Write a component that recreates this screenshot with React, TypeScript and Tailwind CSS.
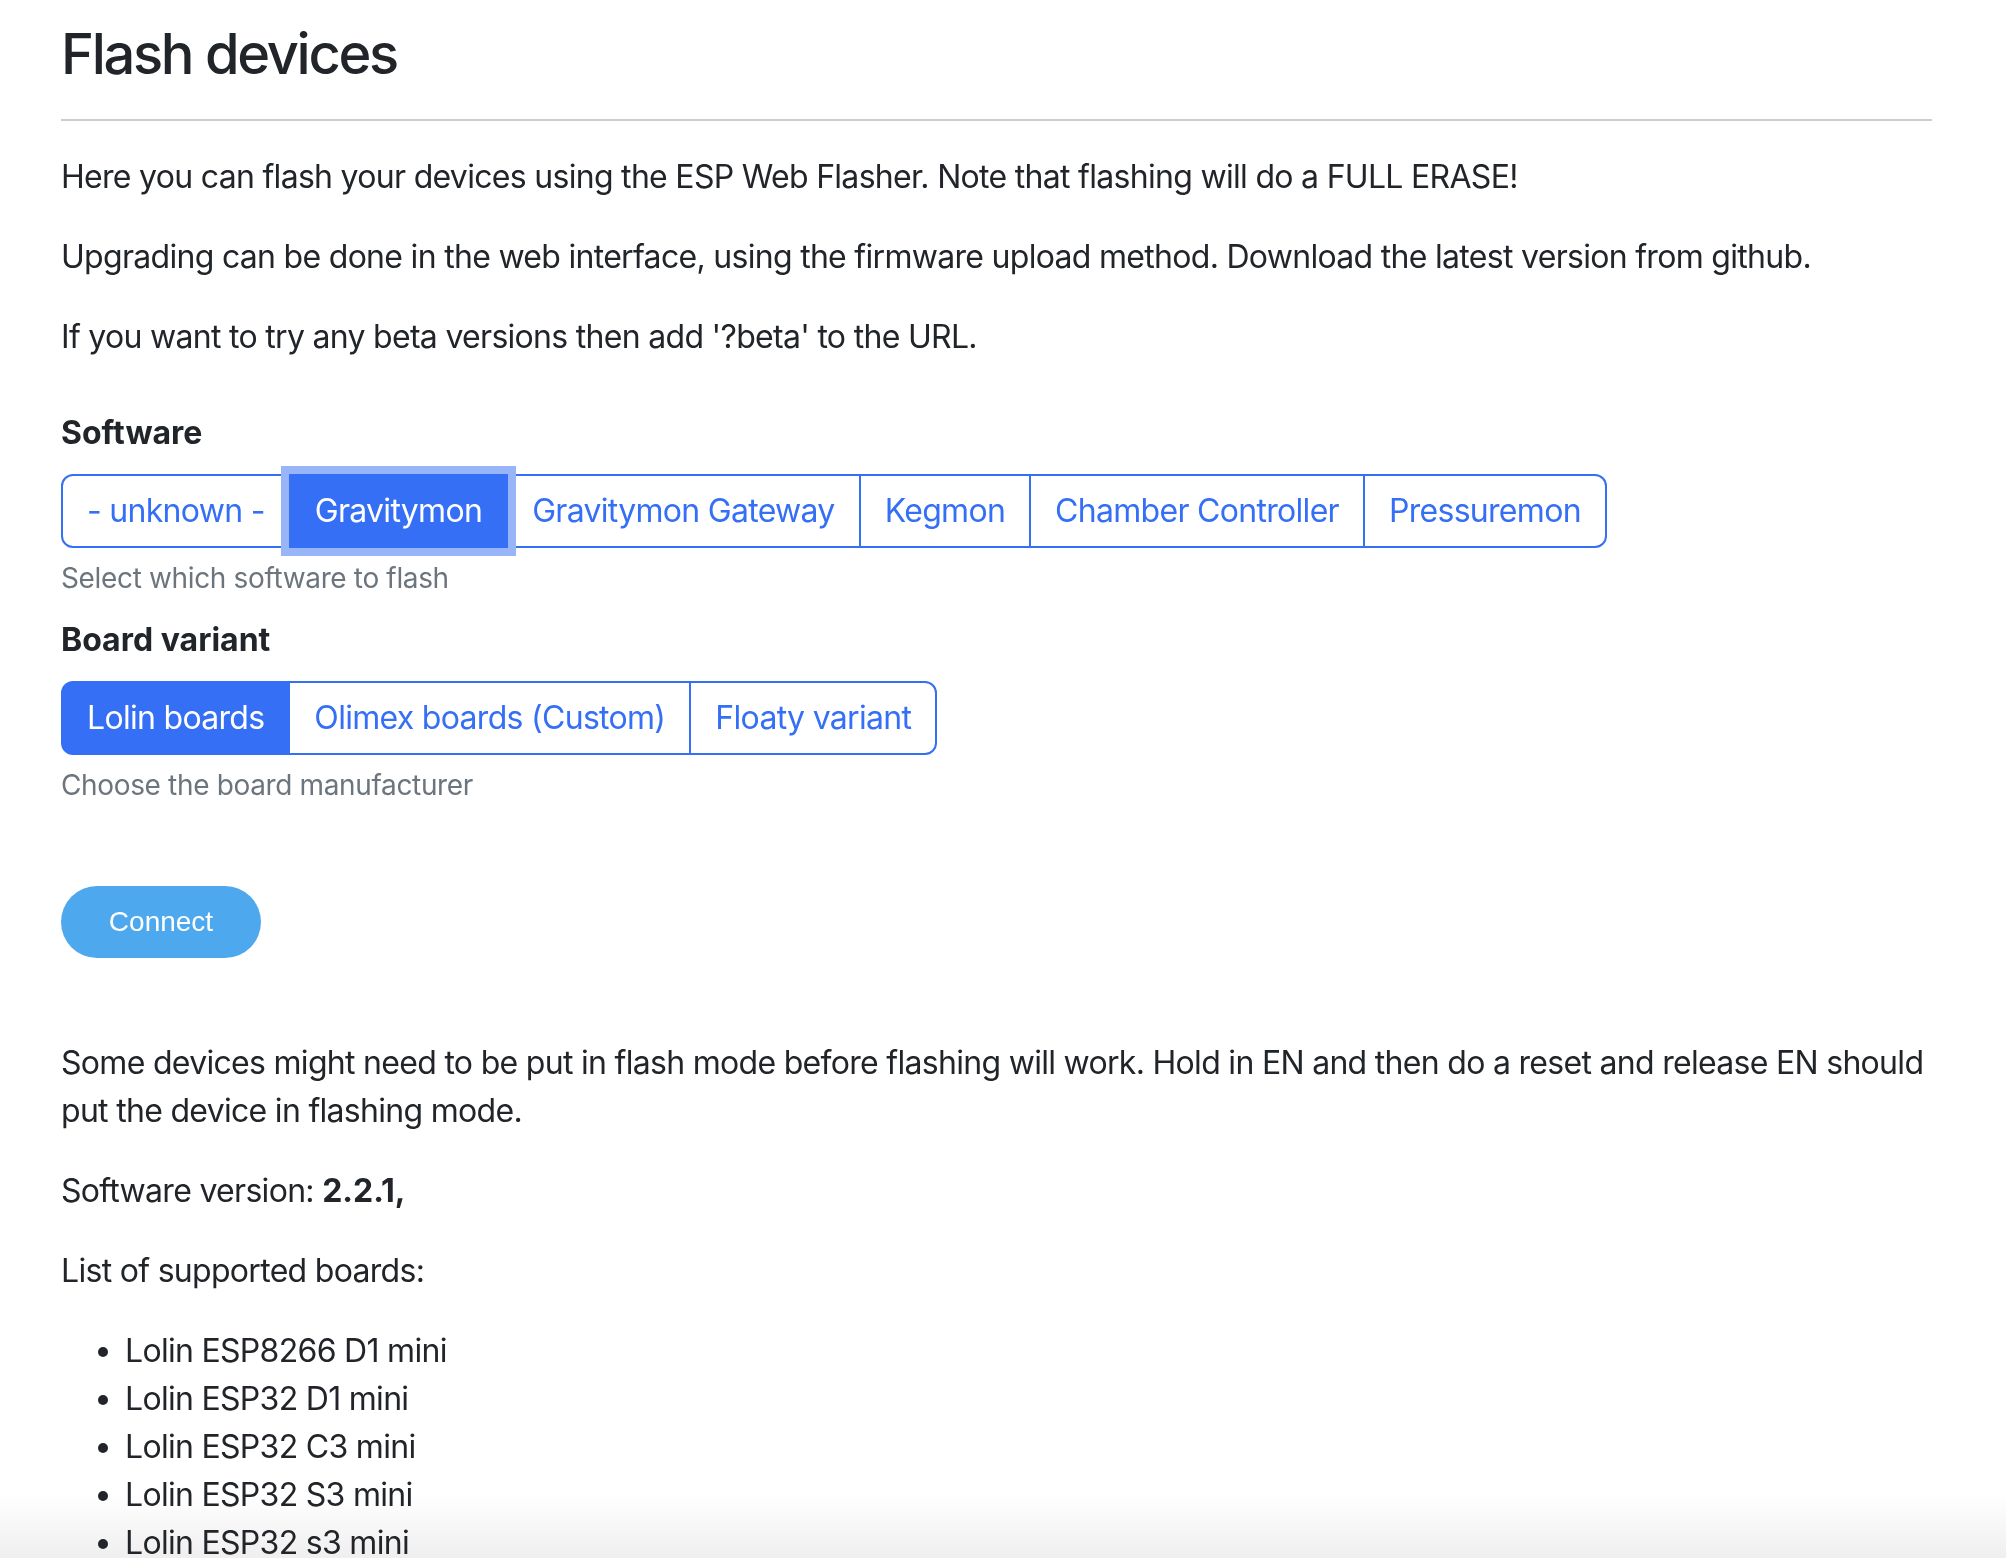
const softwareOptions = [
  '- unknown -',
  'Gravitymon',
  'Gravitymon Gateway',
  'Kegmon',
  'Chamber Controller',
  'Pressuremon',
];

const boardOptions = ['Lolin boards', 'Olimex boards (Custom)', 'Floaty variant'];

const boards = [
  'Lolin ESP8266 D1 mini',
  'Lolin ESP32 D1 mini',
  'Lolin ESP32 C3 mini',
  'Lolin ESP32 S3 mini',
  'Lolin ESP32 s3 mini',
];

function ButtonGroup({
  options,
  active,
  focused,
}: {
  options: string[];
  active: number;
  focused?: boolean;
}) {
  return (
    <div className="flex">
      {options.map((label, i) => {
        const isActive = i === active;
        return (
          <button
            key={label}
            className={[
              'h-[74px] px-[24px] border-2 border-[#346ff5] text-[32px] leading-[48px] tracking-[-0.7px] whitespace-nowrap',
              i > 0 ? '-ml-[2px]' : '',
              i === 0 ? 'rounded-l-[12px]' : '',
              i === options.length - 1 ? 'rounded-r-[12px]' : '',
              isActive ? 'bg-[#346ff5] text-white relative z-10' : 'bg-white text-[#346ff5]',
              isActive && focused ? 'shadow-[0_0_0_8px_#98b5f8]' : '',
            ].join(' ')}
          >
            {label}
          </button>
        );
      })}
    </div>
  );
}

export default function App() {
  return (
    <div className="min-h-[1558px] bg-white text-[#212529] font-['Inter','Noto_Sans',sans-serif] text-[32px] leading-[48px] tracking-[-0.7px]">
      <div className="fixed left-0 right-0 bottom-0 h-[64px] bg-linear-to-b from-white to-[#efefef] z-0" />
      <div className="relative z-10 pl-[61px] pr-[74px] pt-[21px]">
        <h1 className="text-[56px] leading-[67px] font-medium tracking-[-2.3px]">Flash devices</h1>
        <hr className="mt-[31px] mb-[32px] border-0 h-[2px] bg-[#cdcdcd]" />

        <p className="mb-[32px]">
          Here you can flash your devices using the ESP Web Flasher. Note that flashing will do a FULL ERASE!
        </p>
        <p className="mb-[32px]">
          Upgrading can be done in the web interface, using the firmware upload method. Download the latest
          version from github.
        </p>
        <p className="mb-[32px]">If you want to try any beta versions then add '?beta' to the URL.</p>

        <div className="pt-[16px]">
          <div className="font-bold tracking-normal mb-[17px]">Software</div>
          <ButtonGroup options={softwareOptions} active={1} focused />
          <div className="mt-[9px] text-[28px] leading-[42px] tracking-[-0.35px] text-[#6c757d]">
            Select which software to flash
          </div>
        </div>

        <div className="mt-[17px]">
          <div className="font-bold tracking-normal mb-[17px]">Board variant</div>
          <ButtonGroup options={boardOptions} active={0} />
          <div className="mt-[9px] text-[28px] leading-[42px] tracking-[-0.35px] text-[#6c757d]">
            Choose the board manufacturer
          </div>
        </div>

        <div className="mt-[80px]">
          <button className="h-[72px] w-[200px] rounded-full bg-[#4ea8ee] text-white text-[28px] tracking-normal font-['Liberation_Sans','Arial',sans-serif]">
            Connect
          </button>
        </div>

        <p className="mt-[81px] mb-[32px]">
          Some devices might need to be put in flash mode before flashing will work. Hold in EN and then do a reset
          and release EN should put the device in flashing mode.
        </p>
        <p className="mb-[32px]">
          Software version: <b className="tracking-normal">2.2.1,</b>
        </p>
        <p className="mb-[32px]">List of supported boards:</p>
        <ul className="list-disc pl-[64px]">
          {boards.map((b) => (
            <li key={b}>{b}</li>
          ))}
        </ul>
      </div>
    </div>
  );
}
